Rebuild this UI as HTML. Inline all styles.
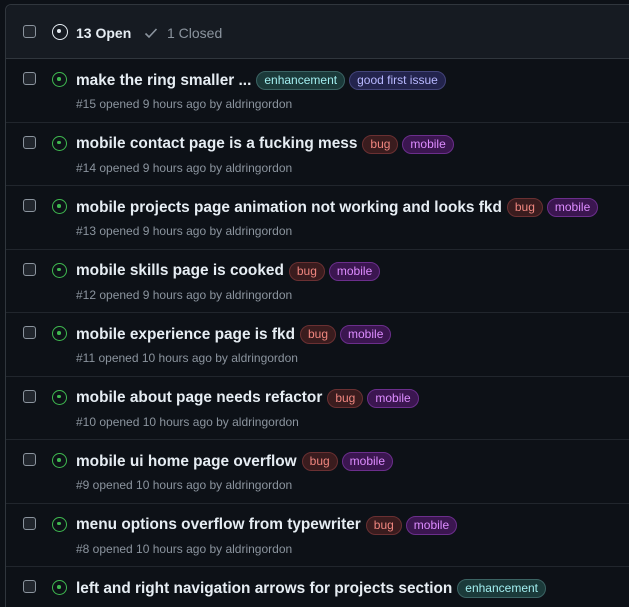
<!DOCTYPE html>
<html><head><meta charset="utf-8"><style>
*{box-sizing:border-box;margin:0;padding:0}
html,body{width:629px;height:607px;overflow:hidden}
body{background:#0d1117;font-family:"Liberation Sans",sans-serif;color:#e6edf3;position:relative}
.box{position:absolute;left:5px;top:4px;right:-8px;bottom:-8px;border:1px solid #30363d;border-radius:6px;background:#0d1117;overflow:hidden}
.hdr{height:54px;background:#161b22;border-bottom:1px solid #30363d;border-radius:6px 6px 0 0;position:relative}
.cb{position:absolute;left:17px;width:13px;height:13px;border:1.5px solid #8b949e;border-radius:3px;background:#21262d}
.row{height:63.5px;border-bottom:1px solid #21262d;position:relative}
.ic{position:absolute;left:46px;width:15px;height:15px;border:1.6px solid #3fb950;border-radius:50%}
.ic:after{content:"";position:absolute;left:4.2px;top:4.2px;width:3.5px;height:3.5px;border-radius:50%;background:#3fb950}
.t{position:absolute;left:70px;top:12px;font-size:15.4px;font-weight:bold;white-space:nowrap;display:flex;align-items:center;color:#e6edf3}
.m{position:absolute;left:70px;top:38px;font-size:12px;color:#8b949e;white-space:nowrap}
.l{display:inline-block;font-size:12px;font-weight:normal;padding:0 7px;height:19px;line-height:17px;border-radius:10px;border:1px solid;margin-left:4px}
.l:first-child{margin-left:5px}
.en{background:#1b3a3a;color:#a2eeef;border-color:#3b6363}
.gf{background:#23244d;color:#b8b8ff;border-color:#43447a}
.bg{background:#3a1c1e;color:#f0867f;border-color:#6a3032}
.mo{background:#3b1650;color:#dd8cff;border-color:#6b2e8c}
</style></head><body>
<div class="box">
<div class="hdr">
<div class="cb" style="top:20px"></div>
<div style="position:absolute;left:46px;top:19px;width:16px;height:16px;border:1.6px solid #e6edf3;border-radius:50%"><div style="position:absolute;left:4.4px;top:4.4px;width:4px;height:4px;border-radius:50%;background:#e6edf3"></div></div>
<div style="position:absolute;left:70px;top:20px;font-size:14px;font-weight:bold">13 Open</div>
<svg style="position:absolute;left:138px;top:22px" width="14" height="12" viewBox="0 0 14 12"><path d="M1.5 6.5 L5 10 L12.5 2" stroke="#8b949e" stroke-width="1.6" fill="none"/></svg>
<div style="position:absolute;left:161px;top:20px;font-size:14px;color:#8b949e">1 Closed</div>
</div>
<div class="row"><div class="cb" style="top:13px"></div><div class="ic" style="top:13px"></div><div class="t">make the ring smaller ...<span class="l en">enhancement</span><span class="l gf">good first issue</span></div><div class="m">#15 opened 9 hours ago by aldringordon</div></div>
<div class="row"><div class="cb" style="top:13px"></div><div class="ic" style="top:13px"></div><div class="t">mobile contact page is a fucking mess<span class="l bg">bug</span><span class="l mo">mobile</span></div><div class="m">#14 opened 9 hours ago by aldringordon</div></div>
<div class="row"><div class="cb" style="top:13px"></div><div class="ic" style="top:13px"></div><div class="t">mobile projects page animation not working and looks fkd<span class="l bg">bug</span><span class="l mo">mobile</span></div><div class="m">#13 opened 9 hours ago by aldringordon</div></div>
<div class="row"><div class="cb" style="top:13px"></div><div class="ic" style="top:13px"></div><div class="t">mobile skills page is cooked<span class="l bg">bug</span><span class="l mo">mobile</span></div><div class="m">#12 opened 9 hours ago by aldringordon</div></div>
<div class="row"><div class="cb" style="top:13px"></div><div class="ic" style="top:13px"></div><div class="t">mobile experience page is fkd<span class="l bg">bug</span><span class="l mo">mobile</span></div><div class="m">#11 opened 10 hours ago by aldringordon</div></div>
<div class="row"><div class="cb" style="top:13px"></div><div class="ic" style="top:13px"></div><div class="t">mobile about page needs refactor<span class="l bg">bug</span><span class="l mo">mobile</span></div><div class="m">#10 opened 10 hours ago by aldringordon</div></div>
<div class="row"><div class="cb" style="top:13px"></div><div class="ic" style="top:13px"></div><div class="t">mobile ui home page overflow<span class="l bg">bug</span><span class="l mo">mobile</span></div><div class="m">#9 opened 10 hours ago by aldringordon</div></div>
<div class="row"><div class="cb" style="top:13px"></div><div class="ic" style="top:13px"></div><div class="t">menu options overflow from typewriter<span class="l bg">bug</span><span class="l mo">mobile</span></div><div class="m">#8 opened 10 hours ago by aldringordon</div></div>
<div class="row"><div class="cb" style="top:13px"></div><div class="ic" style="top:13px"></div><div class="t">left and right navigation arrows for projects section<span class="l en">enhancement</span></div><div class="m">#7 opened 10 hours ago by aldringordon</div></div>
</div>
</body></html>
